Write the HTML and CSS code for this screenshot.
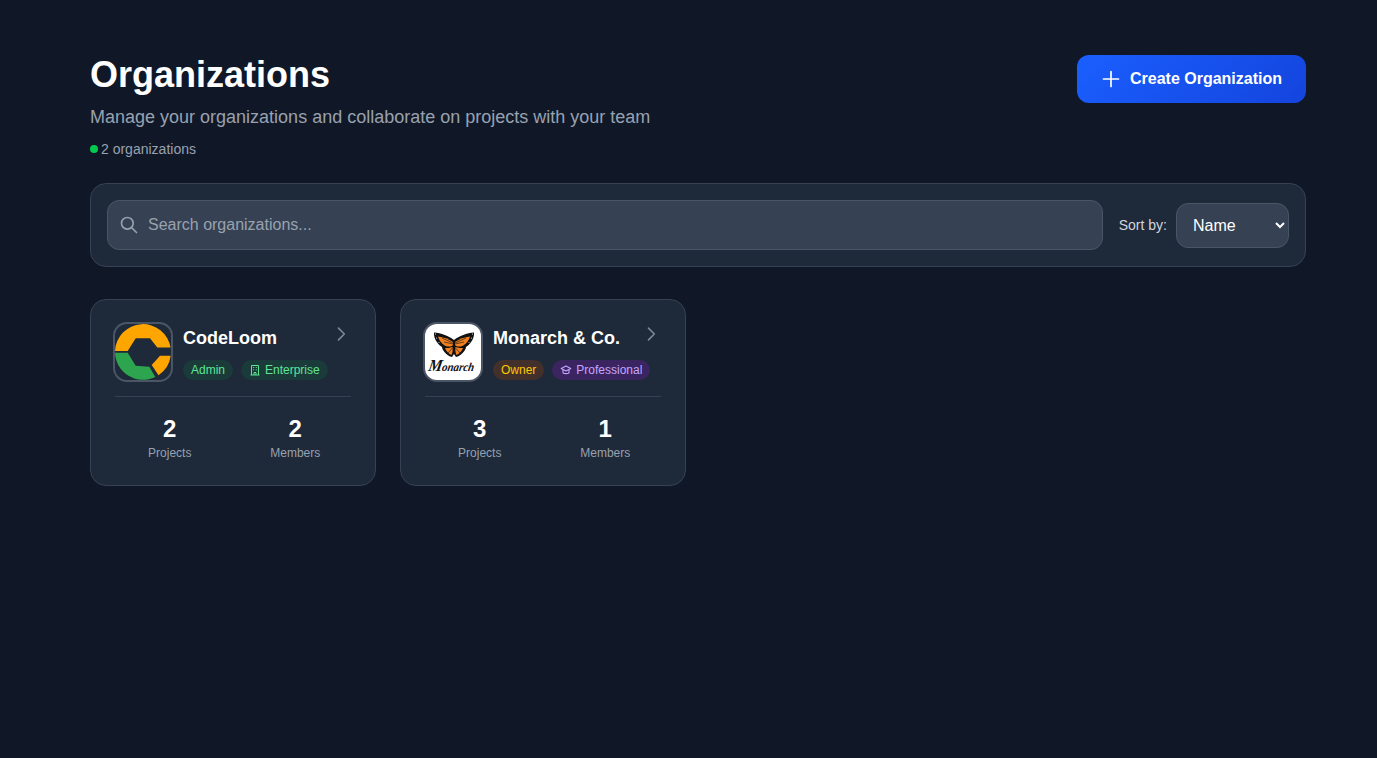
FILE: index.html
```html
<!DOCTYPE html>
<html lang="en">
<head>
    <meta charset="UTF-8">
    <meta name="viewport" content="width=device-width, initial-scale=1.0">
    <title>Organizations</title>
    <link rel="stylesheet" href="styles.css">
</head>
<body>

    <div class="page">
        <div class="page-header">
            <div>
                <h1>Organizations</h1>
                <p class="subtitle">Manage your organizations and collaborate on projects with your team</p>
                <div class="count"><span class="dot"></span>2 organizations</div>
            </div>
            <button class="create-btn">
                <svg width="20" height="20" viewBox="0 0 20 20" fill="none" stroke="currentColor" stroke-width="1.7" stroke-linecap="round"><path d="M10 2.500v15M2.500 10h15"/></svg>
                Create Organization
            </button>
        </div>

        <div class="toolbar">
            <div class="search">
                <svg class="search-icon" width="20" height="20" viewBox="0 0 24 24" fill="none" stroke="currentColor" stroke-width="2" stroke-linecap="round"><circle cx="10" cy="10" r="7"/><path d="M21 21l-6-6"/></svg>
                <input type="text" placeholder="Search organizations...">
            </div>
            <label class="sort-label" for="sort">Sort by:</label>
            <select id="sort" class="sort-select">
                <option>Name</option>
                <option>Newest</option>
            </select>
        </div>

        <div class="org-grid">
            <div class="org-card">
                <div class="org-head">
                    <svg class="org-logo logo-dark" viewBox="0 0 56 56">
                        <path fill="#ffa500" d="M0 27A28 28 0 0 1 55.600 23.500L42.300 23.500L35 14.300L20.700 14.300L12.700 27Z"/>
                        <path fill="#2da44e" d="M0 28.700L12.700 28.700L20.700 41.700L34.300 42.700L40.300 53A28 28 0 0 1 0 28.700Z"/>
                        <path fill="#ffa500" d="M55.700 31.700L45 31.700L36.700 41L43.500 51.200A28 28 0 0 0 55.700 31.700Z"/>
                    </svg>
                    <div class="org-info">
                        <div class="org-title">
                            <h3>CodeLoom</h3>
                            <svg class="chevron" width="20" height="20" viewBox="0 0 24 24" fill="none" stroke="currentColor" stroke-width="2" stroke-linecap="round" stroke-linejoin="round"><path d="M9 5l7 7-7 7"/></svg>
                        </div>
                        <div class="badges">
                            <span class="badge badge-green">Admin</span>
                            <span class="badge badge-green">
                                <svg width="12" height="12" viewBox="0 0 12 12" fill="none" stroke="currentColor"><path d="M2.500 11V1.500h7V11M1.500 11h9M5 11V8.500h2V11"/><path d="M4.200 3.500h1M6.800 3.500h1M4.200 5.800h1M6.800 5.800h1"/></svg>
                                Enterprise
                            </span>
                        </div>
                    </div>
                </div>
                <div class="org-stats">
                    <div class="stat"><div class="stat-num">2</div><div class="stat-label">Projects</div></div>
                    <div class="stat"><div class="stat-num">2</div><div class="stat-label">Members</div></div>
                </div>
            </div>

            <div class="org-card">
                <div class="org-head">
                    <svg class="org-logo logo-white" viewBox="0 0 56 56">
                        <defs>
                            <g id="wing">
                                <path fill="#111" d="M29 16C24 12 16 9 9 8.500C8.500 13 11 19 17 23C17 26 22 32 27 33L29 30Z"/>
                                <path fill="#f08020" d="M28 18C24 15 18 13 13 12.500C14 16 16 19 19 21C22 23 26 23 28 21Z"/>
                                <path fill="#f08020" d="M27.500 23C25 24 22 24 20 24C21 27 24 30 26.500 31C27.500 29 28 26 27.500 23Z"/>
                                <path fill="none" stroke="#111" stroke-width="0.600" d="M28 19L17 14M28 20L19 18M27.500 24L23 29"/>
                                <circle fill="#fff" cx="10.500" cy="10" r="0.600"/>
                                <circle fill="#fff" cx="11.500" cy="14" r="0.500"/>
                                <circle fill="#fff" cx="14" cy="18.500" r="0.500"/>
                            </g>
                        </defs>
                        <use href="#wing"/>
                        <use href="#wing" transform="translate(58 0) scale(-1 1)"/>
                        <text class="logo-word" x="11" y="47" textLength="46" lengthAdjust="spacingAndGlyphs" transform="skewX(-10)"><tspan class="logo-cap">M</tspan>onarch</text>
                    </svg>
                    <div class="org-info">
                        <div class="org-title">
                            <h3>Monarch &amp; Co.</h3>
                            <svg class="chevron" width="20" height="20" viewBox="0 0 24 24" fill="none" stroke="currentColor" stroke-width="2" stroke-linecap="round" stroke-linejoin="round"><path d="M9 5l7 7-7 7"/></svg>
                        </div>
                        <div class="badges">
                            <span class="badge badge-yellow">Owner</span>
                            <span class="badge badge-purple">
                                <svg width="12" height="12" viewBox="0 0 24 24" fill="none" stroke="currentColor" stroke-width="2.200" stroke-linejoin="round"><path d="M12 4L2.500 9l9.500 5 9.500-5z"/><path d="M6 11.500V17c0 3 12 3 12 0v-5.500"/></svg>
                                Professional
                            </span>
                        </div>
                    </div>
                </div>
                <div class="org-stats">
                    <div class="stat"><div class="stat-num">3</div><div class="stat-label">Projects</div></div>
                    <div class="stat"><div class="stat-num">1</div><div class="stat-label">Members</div></div>
                </div>
            </div>
        </div>
    </div>

</body>
</html>
```

FILE: styles.css
```css
/* General Styles */
* {
    box-sizing: border-box;
}

body {
    margin: 0;
    min-height: 758px;
    background-color: #101828;
    color: white;
    font-family: "Liberation Sans", Arial, sans-serif;
}

.page {
    padding: 55px 71px 0 90px;
}

/* Header */
.page-header {
    display: flex;
    justify-content: space-between;
    align-items: flex-start;
    margin-bottom: 24px;
}

h1 {
    margin: 0;
    font-size: 36px;
    line-height: 40px;
    font-weight: 700;
}

.subtitle {
    margin: 8px 0 0;
    font-size: 18px;
    line-height: 28px;
    color: #99a1af;
}

.count {
    display: flex;
    align-items: center;
    gap: 3px;
    margin-top: 8px;
    font-size: 14px;
    line-height: 20px;
    color: #99a1af;
}

.dot {
    width: 8px;
    height: 8px;
    border-radius: 50%;
    background: #00c950;
}

.create-btn {
    display: flex;
    align-items: center;
    gap: 9px;
    height: 48px;
    padding: 0 24px;
    border: none;
    border-radius: 12px;
    background: linear-gradient(135deg, #1a5fff, #1444dd);
    color: white;
    font-family: inherit;
    font-size: 16px;
    font-weight: 700;
}

/* Search and sort */
.toolbar {
    display: flex;
    align-items: center;
    padding: 16px;
    margin-bottom: 32px;
    background: #1e2939;
    border: 1px solid #364153;
    border-radius: 16px;
}

.search {
    flex: 1;
    display: flex;
    align-items: center;
    gap: 8px;
    height: 50px;
    padding: 0 11px;
    background: #364153;
    border: 1px solid #4a5565;
    border-radius: 12px;
    margin-right: 16px;
}

.search-icon {
    color: #99a1af;
    flex: none;
}

.search input {
    flex: 1;
    padding: 1px 1px;
    border: none;
    outline: none;
    background: transparent;
    color: white;
    font-family: inherit;
    font-size: 16px;
}

.search input::placeholder {
    color: #99a1af;
}

.sort-label {
    margin-right: 9px;
    font-size: 14px;
    color: #d1d5dc;
}

.sort-select {
    width: 113px;
    height: 45px;
    padding: 0 12px;
    background: #364153;
    border: 1px solid #4a5565;
    border-radius: 12px;
    color: white;
    font-family: inherit;
    font-size: 16px;
    outline: none;
}

/* Organization cards */
.org-grid {
    display: grid;
    grid-template-columns: repeat(4, 1fr);
    gap: 24px;
}

.org-card {
    padding: 24px;
    background: #1e2939;
    border: 1px solid #364153;
    border-radius: 16px;
}

.org-head {
    display: flex;
    gap: 12px;
    padding-bottom: 16px;
    border-bottom: 1px solid #364153;
}

.org-logo {
    flex: none;
    width: 56px;
    height: 56px;
    border-radius: 12px;
    box-shadow: 0 0 0 2px #4a5565;
}

.logo-white {
    background: white;
}

.logo-word {
    font-family: "Liberation Serif", serif;
    font-style: italic;
    font-weight: 700;
    font-size: 12px;
    fill: #111;
}

.logo-cap {
    font-size: 17px;
}

.org-info {
    flex: 1;
    min-width: 0;
}

.org-title {
    display: flex;
    justify-content: space-between;
    align-items: flex-start;
}

.org-title h3 {
    margin: 0;
    font-size: 18px;
    line-height: 28px;
    font-weight: 700;
}

.chevron {
    color: #7b8797;
}

.badges {
    display: flex;
    gap: 8px;
    margin-top: 8px;
    white-space: nowrap;
}

.badge {
    display: flex;
    align-items: center;
    gap: 4px;
    height: 20px;
    padding: 0 8px;
    border-radius: 10px;
    font-size: 12px;
}

.badge-green {
    background: #1a3b3a;
    color: #5fe594;
}

.badge-yellow {
    background: #43302b;
    color: #fdc700;
}

.badge-purple {
    background: #3b2560;
    color: #c4a5ff;
}

.org-stats {
    display: grid;
    grid-template-columns: 1fr 1fr;
    gap: 16px;
    padding: 16px 1px 0 0;
}

.stat {
    text-align: center;
}

.stat-num {
    font-size: 24px;
    line-height: 32px;
    font-weight: 700;
}

.stat-label {
    font-size: 12px;
    line-height: 16px;
    color: #99a1af;
}
```
